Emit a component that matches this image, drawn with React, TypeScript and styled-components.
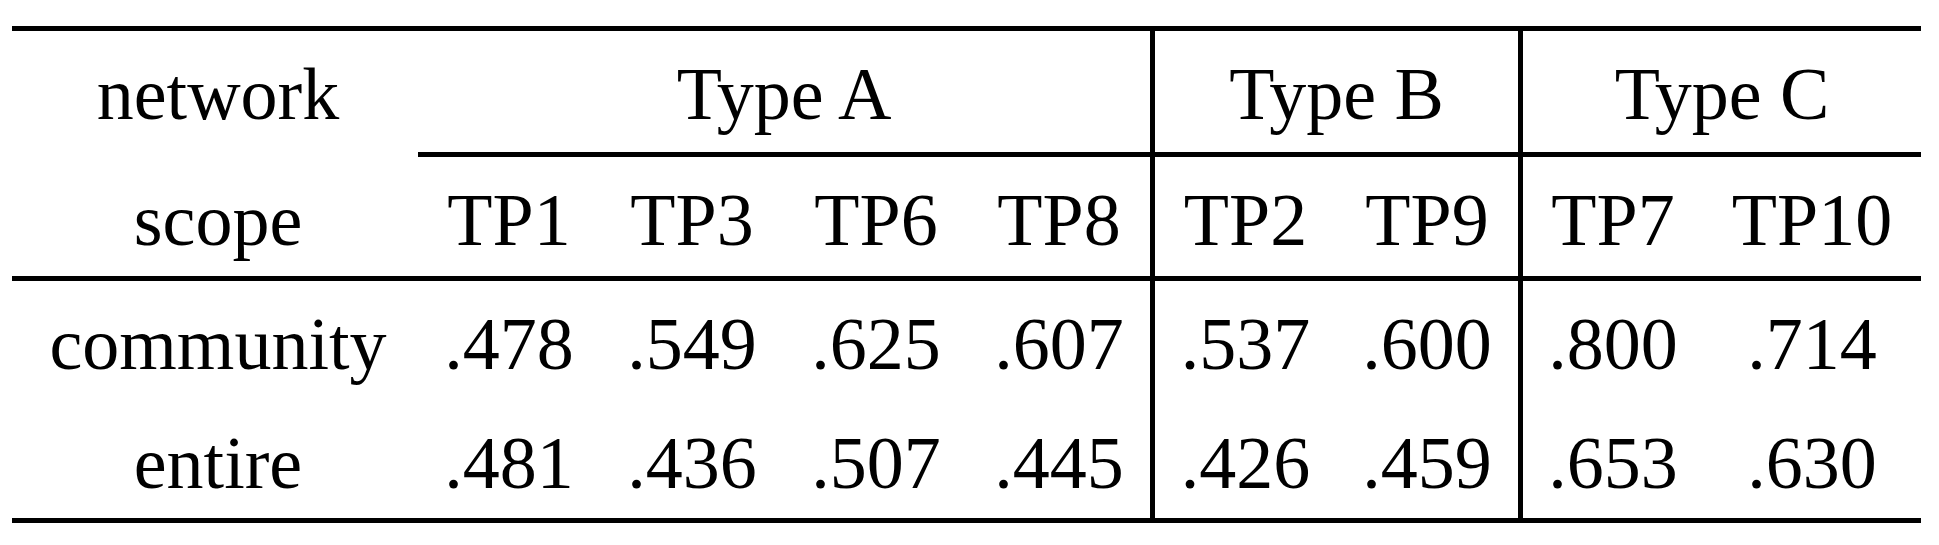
import React from 'react'
import styled, { createGlobalStyle } from 'styled-components'

const GlobalStyle = createGlobalStyle`
  html, body {
    margin: 0;
    padding: 0;
    background: #ffffff;
  }
  * {
    box-sizing: border-box;
  }
`

const RULE = '5px solid #000000'

const Table = styled.div`
  display: grid;
  grid-template-columns: 406px 182px 184px 184px 182px 186px 182px 185px 218px;
  grid-template-rows: 126px 124px 119px 118px;
  width: 1909px;
  margin: 26px 0 0 12px;
  border-top: ${RULE};
  border-bottom: ${RULE};
  font-family: 'Liberation Serif', 'Times New Roman', serif;
  font-size: 74px;
  line-height: 74px;
  color: #000000;
`

const Cell = styled.div<{ $span?: number; $left?: boolean; $rule?: boolean }>`
  grid-column: span ${({ $span }) => $span || 1};
  padding-top: 26px;
  text-align: center;
  white-space: nowrap;
  border-left: ${({ $left }) => ($left ? RULE : 'none')};
  border-bottom: ${({ $rule }) => ($rule ? RULE : 'none')};
`

const Label = styled(Cell)`
  padding-left: 6px;
`

const groups = [
  { name: 'Type A', cols: ['TP1', 'TP3', 'TP6', 'TP8'] },
  { name: 'Type B', cols: ['TP2', 'TP9'] },
  { name: 'Type C', cols: ['TP7', 'TP10'] },
]

const rows = [
  { label: 'community', values: ['.478', '.549', '.625', '.607', '.537', '.600', '.800', '.714'] },
  { label: 'entire', values: ['.481', '.436', '.507', '.445', '.426', '.459', '.653', '.630'] },
]

// columns that start a new group get the vertical rule
const groupStarts = [4, 6]

const App = () => {
  const tps = groups.flatMap((g) => g.cols)

  return (
    <>
      <GlobalStyle />
      <Table>
        <Label>network</Label>
        {groups.map((g, i) => (
          <Cell key={g.name} $span={g.cols.length} $left={i > 0} $rule>
            {g.name}
          </Cell>
        ))}

        <Label $rule>scope</Label>
        {tps.map((tp, i) => (
          <Cell key={tp} $left={groupStarts.includes(i)} $rule>
            {tp}
          </Cell>
        ))}

        {rows.map((row) => (
          <React.Fragment key={row.label}>
            <Label>{row.label}</Label>
            {row.values.map((v, i) => (
              <Cell key={i} $left={groupStarts.includes(i)}>
                {v}
              </Cell>
            ))}
          </React.Fragment>
        ))}
      </Table>
    </>
  )
}

export default App
